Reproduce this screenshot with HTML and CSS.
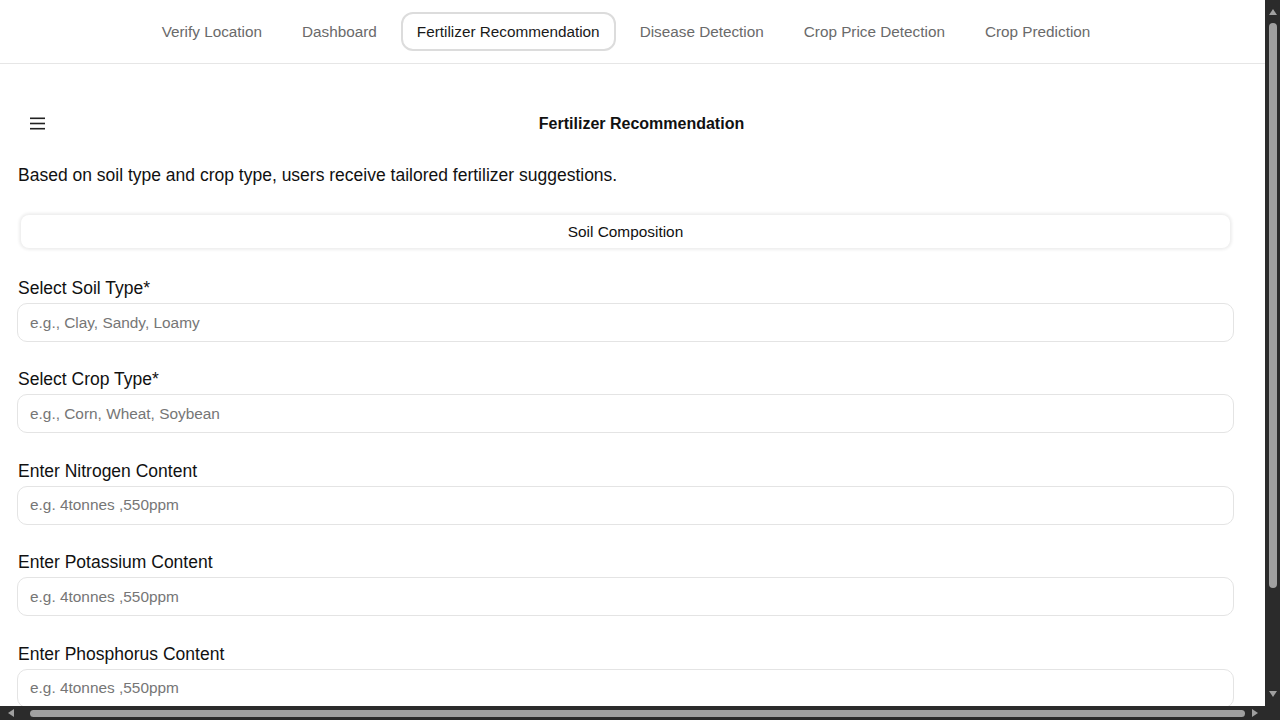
FILE: index.html
```html
<!DOCTYPE html>
<html lang="en">
<head>
<meta charset="utf-8">
<title>Fertilizer Recommendation</title>
<link rel="stylesheet" href="styles.css">
</head>
<body>
  <nav class="topnav">
    <a class="nav-item" href="#">Verify Location</a>
    <a class="nav-item" href="#">Dashboard</a>
    <a class="nav-item nav-item--active" href="#">Fertilizer Recommendation</a>
    <a class="nav-item" href="#">Disease Detection</a>
    <a class="nav-item" href="#">Crop Price Detection</a>
    <a class="nav-item" href="#">Crop Prediction</a>
  </nav>

  <main class="main">
    <header class="page-header">
      <button class="menu-btn" aria-label="Menu">
        <svg width="15" height="13" viewBox="0 0 15 13" aria-hidden="true">
          <rect x="0" y="0.5" width="15" height="1.6" fill="#222"/>
          <rect x="0" y="5.7" width="15" height="1.6" fill="#222"/>
          <rect x="0" y="10.9" width="15" height="1.6" fill="#222"/>
        </svg>
      </button>
      <h1 class="page-title">Fertilizer Recommendation</h1>
    </header>

    <p class="intro">Based on soil type and crop type, users receive tailored fertilizer suggestions.</p>

    <div class="section-tab">Soil Composition</div>

    <form class="form">
      <div class="field">
        <label class="field-label" for="soil">Select Soil Type*</label>
        <input class="field-input" id="soil" type="text" placeholder="e.g., Clay, Sandy, Loamy">
      </div>
      <div class="field">
        <label class="field-label" for="crop">Select Crop Type*</label>
        <input class="field-input" id="crop" type="text" placeholder="e.g., Corn, Wheat, Soybean">
      </div>
      <div class="field">
        <label class="field-label" for="nitrogen">Enter Nitrogen Content</label>
        <input class="field-input" id="nitrogen" type="text" placeholder="e.g. 4tonnes ,550ppm">
      </div>
      <div class="field">
        <label class="field-label" for="potassium">Enter Potassium Content</label>
        <input class="field-input" id="potassium" type="text" placeholder="e.g. 4tonnes ,550ppm">
      </div>
      <div class="field">
        <label class="field-label" for="phosphorus">Enter Phosphorus Content</label>
        <input class="field-input" id="phosphorus" type="text" placeholder="e.g. 4tonnes ,550ppm">
      </div>
    </form>
  </main>

  <div class="sb sb-v" aria-hidden="true">
    <span class="sb-arrow sb-arrow--up"></span>
    <span class="sb-thumb sb-thumb--v"></span>
    <span class="sb-arrow sb-arrow--down"></span>
  </div>
  <div class="sb sb-h" aria-hidden="true">
    <span class="sb-arrow sb-arrow--left"></span>
    <span class="sb-thumb sb-thumb--h"></span>
    <span class="sb-arrow sb-arrow--right"></span>
  </div>
</body>
</html>
```

FILE: styles.css
```css
html {
  background: #ffffff;
}

body {
  margin: 0;
  min-width: 1283px;
  font-family: "Liberation Sans", Arial, sans-serif;
  color: #111111;
  background: #ffffff;
}

/* ---------- top navigation ---------- */
.topnav {
  display: flex;
  justify-content: center;
  align-items: center;
  gap: 8px;
  padding: 12px 31px 12px 0;
  border-bottom: 1px solid #e6e6e6;
}

.nav-item {
  display: block;
  padding: 10px 14px;
  border: 2px solid transparent;
  border-radius: 12px;
  font-size: 15.3px;
  line-height: 15px;
  color: #6a6a6a;
  text-decoration: none;
  white-space: nowrap;
}

.nav-item--active {
  color: #1a1a1a;
  border-color: #dcdcdc;
}

/* ---------- main ---------- */
.main {
  width: 1251px;
  box-sizing: border-box;
  padding: 44px 17px 136px;
}

.page-header {
  display: flex;
  align-items: center;
  height: 32px;
}

.menu-btn {
  display: flex;
  align-items: center;
  width: 32px;
  height: 32px;
  box-sizing: border-box;
  padding: 0 0 0 13px;
  margin-top: -2px;
  border: 0;
  background: transparent;
  cursor: pointer;
}

.page-title {
  flex: 1;
  margin: 0;
  text-align: center;
  font-size: 16px;
  font-weight: bold;
  line-height: 20px;
  color: #111111;
}

.intro {
  margin: 25px 0 0 1px;
  font-size: 17.5px;
  line-height: 20px;
  color: #111111;
}

.section-tab {
  margin: 30px 4px 0;
  padding: 8px 0;
  font-size: 15.4px;
  line-height: 17px;
  text-align: center;
  color: #111111;
  background: #ffffff;
  border-radius: 8px;
  box-shadow: 0 0 3px 2px rgba(0, 0, 0, 0.07);
}

.form {
  display: flex;
  flex-direction: column;
  gap: 27.4px;
  margin-top: 30px;
}

.field {
  display: flex;
  flex-direction: column;
}

.field-label {
  margin: 0 0 5px 1px;
  font-size: 17.5px;
  line-height: 20px;
  color: #111111;
}

.field-input {
  box-sizing: border-box;
  width: 100%;
  height: 39px;
  padding: 0 12px;
  border: 1px solid #e4e4e4;
  border-radius: 10px;
  font-family: "Liberation Sans", Arial, sans-serif;
  font-size: 15.4px;
  color: #222222;
  background: #ffffff;
  outline: none;
}

.field-input::placeholder {
  color: #767676;
}

/* ---------- window scrollbars (drawn over the page) ---------- */
.sb {
  position: fixed;
  display: flex;
  align-items: center;
  background: #2b2b2b;
  z-index: 10;
}

.sb-v {
  top: 0;
  right: 0;
  width: 15px;
  height: 706px;
  flex-direction: column;
  padding: 9px 0 9px;
  box-sizing: border-box;
}

.sb-h {
  left: 0;
  bottom: 0;
  width: 1280px;
  height: 14px;
  padding-left: 8px;
  box-sizing: border-box;
}

.sb-thumb {
  display: block;
  background: #a0a0a0;
  border-radius: 4px;
}

.sb-thumb--v {
  width: 8px;
  height: 565px;
  margin-top: 8px;
}

.sb-thumb--h {
  width: 1215px;
  height: 7px;
  margin-left: 16px;
}

.sb-arrow {
  display: block;
  width: 0;
  height: 0;
  border: 4px solid transparent;
}

.sb-arrow--up {
  border-top-width: 0;
  border-bottom: 6px solid #a0a0a0;
}

.sb-arrow--down {
  margin-top: auto;
  border-bottom-width: 0;
  border-top: 6px solid #a0a0a0;
}

.sb-arrow--left {
  border-left-width: 0;
  border-right: 6px solid #a0a0a0;
}

.sb-arrow--right {
  margin-left: 7px;
  border-right-width: 0;
  border-left: 6px solid #a0a0a0;
}
```
